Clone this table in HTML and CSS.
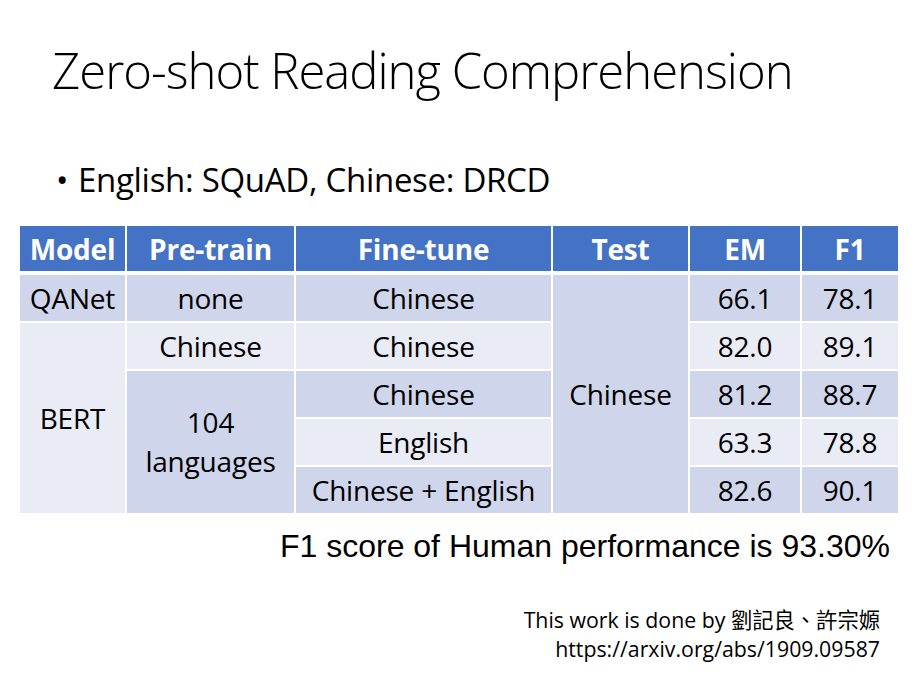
FILE: index.html
```html
<!DOCTYPE html>
<html lang="en">
<head>
<meta charset="utf-8">
<title>Zero-shot Reading Comprehension</title>
<link rel="stylesheet" href="styles.css">
</head>
<body>
<div class="slide">
  <h1 class="title">Zero-shot Reading Comprehension</h1>
  <ul class="bullets">
    <li>English: SQuAD, Chinese: DRCD</li>
  </ul>
  <table class="results">
    <colgroup>
      <col class="c1"><col class="c2"><col class="c3"><col class="c4"><col class="c5"><col class="c6">
    </colgroup>
    <thead>
      <tr><th>Model</th><th>Pre-train</th><th>Fine-tune</th><th>Test</th><th>EM</th><th>F1</th></tr>
    </thead>
    <tbody>
      <tr class="dark">
        <td>QANet</td><td>none</td><td>Chinese</td>
        <td rowspan="5" class="d">Chinese</td>
        <td>66.1</td><td>78.1</td>
      </tr>
      <tr class="light">
        <td rowspan="4" class="l">BERT</td><td>Chinese</td><td>Chinese</td><td>82.0</td><td>89.1</td>
      </tr>
      <tr class="dark">
        <td rowspan="3" class="d multi">104<br>languages</td><td>Chinese</td><td>81.2</td><td>88.7</td>
      </tr>
      <tr class="light">
        <td>English</td><td>63.3</td><td>78.8</td>
      </tr>
      <tr class="dark">
        <td>Chinese + English</td><td>82.6</td><td>90.1</td>
      </tr>
    </tbody>
  </table>
  <p class="human">F1 score of Human performance is 93.30%</p>
  <div class="credit">
    <p>This work is done by 劉記良、許宗嫄</p>
    <p>https://arxiv.org/abs/1909.09587</p>
  </div>
</div>
</body>
</html>
```
FILE: styles.css
```css
html, body {
  margin: 0;
  padding: 0;
  background: #ffffff;
}
.slide {
  width: 924px;
  height: 678px;
  box-sizing: border-box;
  padding: 40px 0 0 0;
  font-family: "Open Sans", "Noto Sans CJK TC", sans-serif;
  color: #000;
  display: flex;
  flex-direction: column;
}
.title {
  margin: 0 0 0 52px;
  font-weight: 300;
  font-size: 49px;
  line-height: 60px;
  letter-spacing: -1px;
}
.bullets {
  list-style: none;
  margin: 60px 0 0 0;
  padding: 0 0 0 56px;
}
.bullets li {
  font-size: 33px;
  line-height: 40px;
  letter-spacing: -0.3px;
}
.bullets li::before {
  content: "•";
  display: inline-block;
  width: 22px;
}
.results {
  margin: 24px 0 0 18px;
  width: 880px;
  border-collapse: collapse;
  table-layout: fixed;
  font-size: 28px;
  letter-spacing: -0.2px;
  text-align: center;
}
.c1 { width: 107px; }
.c2 { width: 169px; }
.c3 { width: 257px; }
.c4 { width: 137px; }
.c5 { width: 112px; }
.c6 { width: 98px; }
.results th, .results td {
  border: 2px solid #ffffff;
  padding: 0;
  vertical-align: middle;
}
.results th {
  background: #4472c4;
  color: #ffffff;
  font-weight: 700;
  height: 45px;
  border-bottom-width: 4px;
}
.results td {
  height: 46px;
}
.results tr.dark td { background: #cfd5ea; }
.results tr.light td { background: #e9ebf5; }
.results td.d { background: #cfd5ea; }
.results td.l { background: #e9ebf5; }
.results td.multi { line-height: 39px; }
.human {
  margin: 12px 34px 0 0;
  text-align: right;
  font-family: "Liberation Sans", Arial, sans-serif;
  font-size: 32px;
  line-height: 38px;
}
.credit {
  margin: 40px 44px 0 0;
  text-align: right;
  font-size: 21.3px;
  line-height: 29px;
}
.credit p { margin: 0; }
```
